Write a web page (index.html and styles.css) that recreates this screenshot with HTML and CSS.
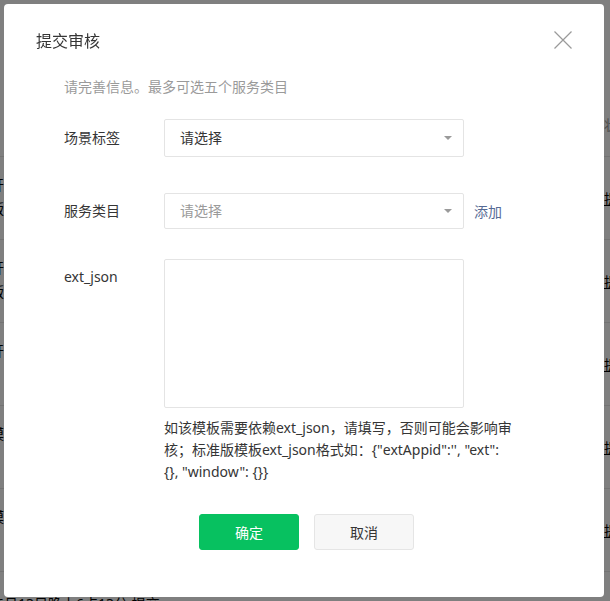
FILE: index.html
```html
<!DOCTYPE html>
<html lang="zh-CN">
<head>
    <meta charset="UTF-8">
    <meta name="viewport" content="width=device-width, initial-scale=1.0">
    <title>提交审核</title>
    <link rel="stylesheet" href="styles.css">
</head>
<body>
    <div class="page">
        <div class="page-head"><span class="page-head-col">状态</span></div>
        <div class="page-row">
            <div class="row-info"><p>开发版本</p><p>版本号</p></div>
            <a class="row-link">提交审核</a>
        </div>
        <div class="page-row">
            <div class="row-info"><p>开发版本</p><p>版本号</p></div>
            <a class="row-link">提交审核</a>
        </div>
        <div class="page-row">
            <div class="row-info"><p>开发版本</p></div>
            <a class="row-link">提交审核</a>
        </div>
        <div class="page-row">
            <div class="row-info"><p>模板</p></div>
            <a class="row-link">提交审核</a>
        </div>
        <div class="page-row">
            <div class="row-info"><p>模板</p></div>
            <a class="row-link">提交审核</a>
        </div>
        <div class="page-foot">6月13日晚上6点13分 提交</div>
    </div>

    <div class="mask"></div>

    <div class="dialog">
        <div class="dialog-hd">
            <h3 class="dialog-title">提交审核</h3>
            <a class="dialog-close" title="关闭">
                <svg width="18" height="18" viewBox="0 0 18 18">
                    <path d="M0.5 0.5 L17.5 17.5 M17.5 0.5 L0.5 17.5" stroke="#9a9a9a" stroke-width="1.2" fill="none"/>
                </svg>
            </a>
        </div>
        <div class="dialog-bd">
            <p class="dialog-tips">请完善信息。最多可选五个服务类目</p>
            <div class="form-item form-item-first">
                <label class="form-label">场景标签</label>
                <div class="form-control">
                    <div class="select select-lg">
                        <span class="select-text">请选择</span>
                        <i class="select-arrow"></i>
                    </div>
                </div>
            </div>
            <div class="form-item form-item-cate">
                <label class="form-label">服务类目</label>
                <div class="form-control">
                    <div class="select">
                        <span class="select-text placeholder">请选择</span>
                        <i class="select-arrow"></i>
                    </div>
                    <a class="form-add">添加</a>
                </div>
            </div>
            <div class="form-item form-item-json">
                <label class="form-label form-label-top">ext_json</label>
                <div class="form-control form-control-col">
                    <textarea class="textarea"></textarea>
                    <p class="form-desc">如该模板需要依赖ext_json，请填写，否则可能会影响审核；标准版模板ext_json格式如：{"extAppid":'', "ext": {}, "window": {}}</p>
                </div>
            </div>
        </div>
        <div class="dialog-ft">
            <button class="btn btn-primary">确定</button>
            <button class="btn btn-default">取消</button>
        </div>
    </div>
</body>
</html>
```

FILE: styles.css
```css
body {
    margin: 0;
    font-family: "Noto Sans", "Noto Sans CJK SC", sans-serif;
    font-size: 14px;
    color: #353535;
    background-color: #ffffff;
    overflow: hidden;
}
p {
    margin: 0;
}
.page {
    width: 610px;
}
.page-head {
    height: 157px;
    border-bottom: 1px solid #e7e7e7;
    box-sizing: border-box;
    display: flex;
    justify-content: flex-end;
    align-items: flex-end;
    padding-bottom: 22px;
}
.page-head-col {
    color: #9a9a9a;
    margin-right: -22px;
}
.page-row {
    height: 83px;
    border-bottom: 1px solid #e7e7e7;
    box-sizing: border-box;
    display: flex;
    justify-content: space-between;
    align-items: center;
}
.row-info {
    margin-left: -10px;
    line-height: 24px;
    color: #000000;
    align-self: flex-start;
    padding-top: 16px;
}
.row-link {
    color: #000000;
    text-decoration: underline;
    margin-right: -50px;
}
.page-foot {
    padding-top: 22px;
    padding-left: 0;
    color: #000000;
    line-height: 20px;
    margin-left: -4px;
}
.mask {
    position: fixed;
    left: 0;
    top: 0;
    right: 0;
    bottom: 0;
    background-color: rgba(0, 0, 0, 0.5);
}
.dialog {
    position: fixed;
    left: 4px;
    top: 4px;
    width: 600px;
    height: 593px;
    background-color: #ffffff;
    border-radius: 4px;
}
.dialog-hd {
    position: relative;
    padding: 25px 32px 0;
}
.dialog-title {
    margin: 0;
    font-size: 16px;
    font-weight: normal;
    line-height: 24px;
    color: #353535;
}
.dialog-close {
    position: absolute;
    right: 32px;
    top: 27px;
    width: 18px;
    height: 18px;
    cursor: pointer;
}
.dialog-close svg {
    display: block;
}
.dialog-bd {
    padding: 0 60px;
}
.dialog-tips {
    margin-top: 24px;
    line-height: 20px;
    color: #9a9a9a;
}
.form-item {
    display: flex;
    align-items: center;
}
.form-item-first {
    margin-top: 22px;
}
.form-item-cate {
    margin-top: 36px;
}
.form-item-json {
    margin-top: 30px;
    align-items: flex-start;
}
.form-label {
    width: 100px;
    flex-shrink: 0;
    line-height: 20px;
}
.form-label-top {
    padding-top: 8px;
}
.form-control {
    display: flex;
    align-items: center;
}
.form-control-col {
    flex-direction: column;
    align-items: flex-start;
}
.select {
    position: relative;
    width: 300px;
    height: 36px;
    box-sizing: border-box;
    border: 1px solid #e4e4e4;
    border-radius: 2px;
    padding: 0 30px 2px 15px;
    display: flex;
    align-items: center;
}
.select-lg {
    height: 38px;
}
.select-text {
    color: #353535;
}
.select-text.placeholder {
    color: #9a9a9a;
}
.select-arrow {
    position: absolute;
    right: 11px;
    top: 50%;
    margin-top: -2px;
    width: 0;
    height: 0;
    border-left: 4px solid transparent;
    border-right: 4px solid transparent;
    border-top: 4px solid #9a9a9a;
}
.form-add {
    margin-left: 10px;
    color: #576b95;
    cursor: pointer;
}
.textarea {
    display: block;
    width: 300px;
    height: 149px;
    box-sizing: border-box;
    border: 1px solid #e4e4e4;
    border-radius: 2px;
    resize: none;
    margin: 0;
    padding: 8px 15px;
    font-family: inherit;
}
.form-desc {
    width: 350px;
    margin-top: 9px;
    line-height: 22px;
    color: #353535;
}
.dialog-ft {
    display: flex;
    justify-content: center;
    gap: 15px;
    margin-top: 31px;
    padding-left: 5px;
}
.btn {
    width: 100px;
    height: 36px;
    border-radius: 3px;
    font-family: inherit;
    font-size: 14px;
    cursor: pointer;
    box-sizing: border-box;
}
.btn-primary {
    background-color: #07c160;
    border: 1px solid #07c160;
    color: #ffffff;
}
.btn-default {
    background-color: #f7f7f7;
    border: 1px solid #e5e5e5;
    color: #353535;
}
```
